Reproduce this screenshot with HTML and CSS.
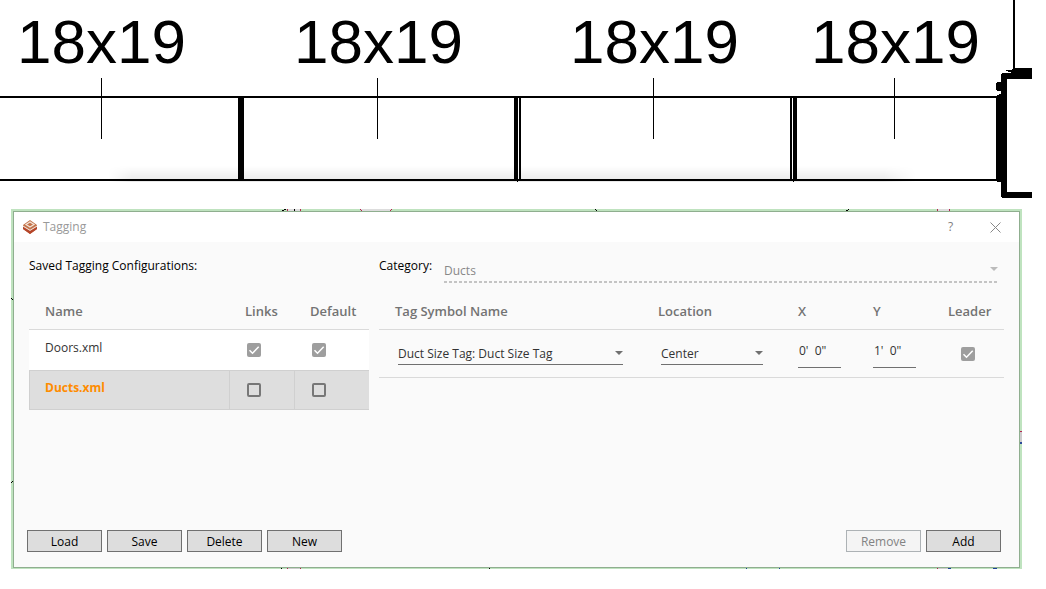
FILE: index.html
```html
<!DOCTYPE html>
<html lang="en">
<head>
<meta charset="utf-8">
<meta name="viewport" content="width=device-width, initial-scale=1">
<title>Tagging</title>
<link rel="stylesheet" href="styles.css">
</head>
<body class="page">
<svg class="plan" viewBox="0 0 1046 200" role="img" aria-label="Duct plan">
  <defs>
    <linearGradient id="shade" x1="0" y1="0" x2="0" y2="1">
      <stop offset="0" stop-color="#000" stop-opacity="0"/>
      <stop offset="1" stop-color="#000" stop-opacity=".09"/>
    </linearGradient>
    <linearGradient id="fade" x1="0" y1="0" x2="1" y2="0">
      <stop offset="0" stop-color="#000"/>
      <stop offset=".03" stop-color="#fff"/>
      <stop offset=".96" stop-color="#fff"/>
      <stop offset="1" stop-color="#000"/>
    </linearGradient>
    <mask id="ends"><rect x="108" y="160" width="808" height="24" fill="url(#fade)"/></mask>
  </defs>
  <rect x="108" y="166" width="808" height="16" fill="url(#shade)" mask="url(#ends)"/>
  <g class="plan-label">
    <text x="17" y="63">18x19</text>
    <text x="294" y="63">18x19</text>
    <text x="570" y="63">18x19</text>
    <text x="811" y="63">18x19</text>
  </g>
  <g shape-rendering="crispEdges">
    <path d="M0 96h998v2H0zM0 179h998v2H0z"/>
    <path d="M101 78h1v61h-1zM377 78h1v61h-1zM653 78h1v61h-1zM894 78h1v61h-1z"/>
    <path d="M238 97h6v83h-6zM514 97h4v83h-4zM519 97h2v83h-2zM790 97h2v83h-2zM793 97h4v83h-4zM517 180h1v2h-1zM793 180h1v2h-1z"/>
    <path d="M1013 0h2v69h-2zM1013 68h19v11h-25v113h25v6h-30v-1h-1V74l1-1h9v-2h1z"/>
    <path d="M1006 70h6v1h-6zM1008 71h4v1h-4z"/>
    <path d="M997 82h4v9h-4l-1-1v-7zM999 94h2v88h-4v-1h-1V96h1v-1h2z"/>
  </g>
</svg>

<main class="frame">
  <svg class="marks marks-top" viewBox="0 0 1011 2" preserveAspectRatio="none" shape-rendering="crispEdges" aria-hidden="true">
    <path fill="#ddd" d="M276 0h14v2h-14zM350 0h30v2h-30zM926 0h13v2h-13z"/>
    <path d="M271 1h2v1h-2zM273 0h2v1h-2zM283 0h1v2h-1zM584 0h1v1h-1zM585 1h1v1h-1zM835 1h2v1h-2zM837 0h1v1h-1z"/>
    <path fill="#b3244f" d="M276 0h1v2h-1zM289 0h1v2h-1zM349 0h1v1h-1zM350 1h1v1h-1zM380 0h1v1h-1zM379 1h1v1h-1zM926 0h1v2h-1zM938 0h1v2h-1z"/>
  </svg>
  <svg class="marks marks-bottom" viewBox="0 0 1011 2" preserveAspectRatio="none" shape-rendering="crispEdges" aria-hidden="true">
    <path fill="#ccc" d="M276 0h14v2h-14zM927 0h10v2h-10z"/>
    <path d="M270 0h1v2h-1zM478 0h1v2h-1z"/>
    <path fill="#b3244f" d="M276 0h1v2h-1zM289 0h1v2h-1zM926 0h1v2h-1z"/>
    <path fill="#1c3f99" d="M735 0h1v2h-1zM768 0h1v2h-1zM937 0h3v2h-3zM982 0h4v2h-4z"/>
  </svg>
  <svg class="marks marks-left" viewBox="0 0 2 360" preserveAspectRatio="none" shape-rendering="crispEdges" aria-hidden="true">
    <path d="M0 89h1v1h-1zM1 90h1v1h-1zM1 272h1v1h-1zM0 273h1v1h-1z"/>
  </svg>
  <svg class="marks marks-right" viewBox="0 0 3 360" preserveAspectRatio="none" shape-rendering="crispEdges" aria-hidden="true">
    <path fill="#ccc" d="M0 222h3v11h-3z"/>
    <path fill="#b3244f" d="M0 222h3v1h-3z"/>
    <path fill="#2c4a99" d="M0 233h3v2h-3z"/>
  </svg>

  <section class="dialog" aria-labelledby="dialog-title">
    <header class="titlebar">
      <svg class="logo" viewBox="0 0 14 14" aria-hidden="true">
        <path fill="#c4744a" d="M0 5l7-5 7 5v4l-7 5-7-5z"/>
        <path fill="none" stroke="#f3e6dc" stroke-width="1.200" d="M3 4.500L7 2l4 2.500L7 7z"/>
        <path fill="#efe0d6" d="M0 5.500l7 4.300 7-4.300v1.600l-7 4.200-7-4.200z"/>
        <path fill="#b5452a" d="M0 6.800l7 4.200 7-4.200V9l-7 5-7-5z"/>
      </svg>
      <h1 class="title" id="dialog-title">Tagging</h1>
      <button class="title-button" type="button" aria-label="Help">?</button>
      <button class="title-button" type="button" aria-label="Close">
        <svg class="close" viewBox="0 0 11 11" aria-hidden="true"><path d="M.5.5l10 10M10.500.5l-10 10"/></svg>
      </button>
    </header>

    <div class="content">
      <div class="panel">
        <h2 class="caption">Saved Tagging Configurations:</h2>
        <table class="grid configs">
          <colgroup><col><col class="c-links"><col class="c-narrow"></colgroup>
          <thead><tr><th>Name</th><th>Links</th><th>Default</th></tr></thead>
          <tbody>
            <tr class="plain">
              <td>Doors.xml</td>
              <td class="tick"><input class="check" type="checkbox" aria-label="Doors.xml links" checked></td>
              <td class="tick"><input class="check" type="checkbox" aria-label="Doors.xml default" checked></td>
            </tr>
            <tr class="selected">
              <td>Ducts.xml</td>
              <td class="tick"><input class="check" type="checkbox" aria-label="Ducts.xml links"></td>
              <td class="tick"><input class="check" type="checkbox" aria-label="Ducts.xml default"></td>
            </tr>
          </tbody>
        </table>
      </div>

      <div class="panel">
        <div class="category">
          <label class="caption" for="category">Category:</label>
          <span class="picker picker-off">
            <select class="select" id="category" disabled><option>Ducts</option></select>
          </span>
        </div>
        <table class="grid tags">
          <colgroup><col><col class="c-location"><col class="c-narrow"><col class="c-narrow"><col class="c-leader"></colgroup>
          <thead><tr><th>Tag Symbol Name</th><th>Location</th><th>X</th><th>Y</th><th>Leader</th></tr></thead>
          <tbody>
            <tr>
              <td class="pick"><span class="picker"><select class="select" aria-label="Tag symbol name"><option>Duct Size Tag: Duct Size Tag</option></select></span></td>
              <td class="pick"><span class="picker"><select class="select" aria-label="Location"><option>Center</option></select></span></td>
              <td class="number"><input class="offset" type="text" aria-label="X" value="0'  0&quot;"></td>
              <td class="number"><input class="offset" type="text" aria-label="Y" value="1'  0&quot;"></td>
              <td class="tick-wide"><input class="check" type="checkbox" aria-label="Leader" checked></td>
            </tr>
          </tbody>
        </table>
      </div>
    </div>

    <footer class="actions">
      <button class="button" type="button">Load</button>
      <button class="button" type="button">Save</button>
      <button class="button" type="button">Delete</button>
      <button class="button" type="button">New</button>
      <button class="button push" type="button" disabled>Remove</button>
      <button class="button" type="button">Add</button>
    </footer>
  </section>
</main>
</body>
</html>
```
FILE: styles.css
```css
* { box-sizing: border-box; }

.page {
  display: flex;
  flex-direction: column;
  min-height: 100vh;
  margin: 0;
  background: #fff;
  color: #000;
  font-family: "Open Sans", "Noto Sans", sans-serif;
  font-size: 12px;
  line-height: 16px;
}

.plan { display: block; width: 100%; height: auto; }
.plan-label { font-family: "Liberation Sans", Arial, sans-serif; font-size: 62px; }

.frame {
  position: relative;
  display: flex;
  flex: 1;
  margin: 9px 24px 20px 11px;
  padding: 2px 2px 1px;
  background: #bfe3bf;
}

.marks { position: absolute; }
.marks-top { top: 0; left: 0; width: 100%; height: 2px; }
.marks-bottom { bottom: 0; left: 0; width: 100%; height: 1px; }
.marks-left { top: 0; left: 0; width: 2px; height: 100%; }
.marks-right { top: 0; right: 0; width: 2px; height: 100%; }

.dialog {
  display: flex;
  flex: 1;
  flex-direction: column;
  border: 1px solid #8fae8f;
  background: #fafafa;
}

.titlebar {
  display: flex;
  align-items: center;
  height: 30px;
  padding: 0 1px 0 9px;
  background: #fff;
}
.logo { width: 14px; height: 14px; margin-right: 6px; }
.title { flex: 1; margin: 0; color: #999; font-size: 12px; font-weight: 400; }
.title-button {
  display: flex;
  align-items: center;
  justify-content: center;
  width: 45px;
  height: 30px;
  padding: 0;
  border: 0;
  background: none;
  color: #808080;
  font: inherit;
}
.close { width: 11px; height: 11px; fill: none; stroke: #888; }

.content {
  display: grid;
  flex: 1;
  grid-template-columns: 340fr 625fr;
  gap: 10px;
  padding: 13px 15px 0;
}
.caption { height: 22px; margin: 0; font-size: 12px; font-weight: 400; line-height: 22px; }
.panel > .caption { margin-bottom: 16px; }

.category { display: flex; gap: 12px; height: 38px; padding-right: 6px; }

.grid { width: 100%; border-collapse: separate; border-spacing: 0; table-layout: fixed; color: #333; }
.grid th {
  height: 37px;
  padding: 0 0 0 16px;
  border-bottom: 1px solid #dadada;
  color: #737373;
  font-size: 13px;
  font-weight: 600;
  text-align: left;
  white-space: nowrap;
}
.grid td { padding: 0 0 0 16px; }
.grid .tick { padding: 0 0 0 18px; }

.c-links { width: 65px; }
.c-narrow { width: 75px; }
.c-location { width: 140px; }
.c-leader { width: 72px; }

.configs td { height: 40px; padding-bottom: 4px; }
.plain { background: #fff; }
.selected { background: #dedede; color: #ff8c00; font-weight: 700; }
.selected td { border: solid #d0d0d0; border-width: 1px 0 1px 1px; padding-left: 15px; }
.selected .tick { padding-left: 17px; }

.tags td { height: 48px; border-bottom: 1px solid #dadada; }
.grid .pick { padding: 0 19px; }
.grid .number { padding-bottom: 4px; }
.grid .tick-wide { padding-left: 29px; }

.picker { position: relative; display: flex; border-bottom: 1px solid #707070; }
.picker::after {
  position: absolute;
  top: 9px;
  right: 0;
  border: solid transparent;
  border-width: 4px 4px 0;
  border-top-color: #707070;
  content: "";
}
.picker-off {
  flex: 1;
  height: 28px;
  padding-top: 4px;
  border: 0;
  background: repeating-linear-gradient(90deg, #c4c4c4 0 3px, transparent 3px 5px) left bottom / 100% 2px no-repeat;
}
.picker-off::after { top: 12px; border-top-color: #bbb; }
.select {
  width: 100%;
  height: 22px;
  padding: 2px 0 0;
  border: 0;
  appearance: none;
  background: none;
  color: inherit;
  font: inherit;
  opacity: 1;
}
.select:disabled { color: #888; }

.offset {
  display: block;
  width: 43px;
  height: 32px;
  padding: 0 0 2px 1px;
  border: 0;
  border-bottom: 1px solid #707070;
  background: none;
  color: inherit;
  font: inherit;
}

.check {
  display: block;
  width: 14px;
  height: 14px;
  margin: 0;
  border: 2px solid #777;
  border-radius: 2px;
  appearance: none;
}
.check:checked {
  border: 0;
  background: #9e9e9e url("data:image/svg+xml,%3Csvg xmlns='http://www.w3.org/2000/svg' viewBox='0 0 14 14'%3E%3Cpath d='M2.500 7.200L5.500 10.200 11.700 3.800' fill='none' stroke='white' stroke-width='1.500'/%3E%3C/svg%3E");
}

.actions { display: flex; gap: 5px; padding: 0 18px 15px 13px; }
.button {
  width: 75px;
  height: 22px;
  padding: 2px 0 0;
  border: 1px solid #707070;
  background: #ddd;
  color: #000;
  font: inherit;
}
.button:disabled { border-color: #adb2b5; background: #f4f4f4; color: #838383; }
.push { margin-left: auto; }
```
